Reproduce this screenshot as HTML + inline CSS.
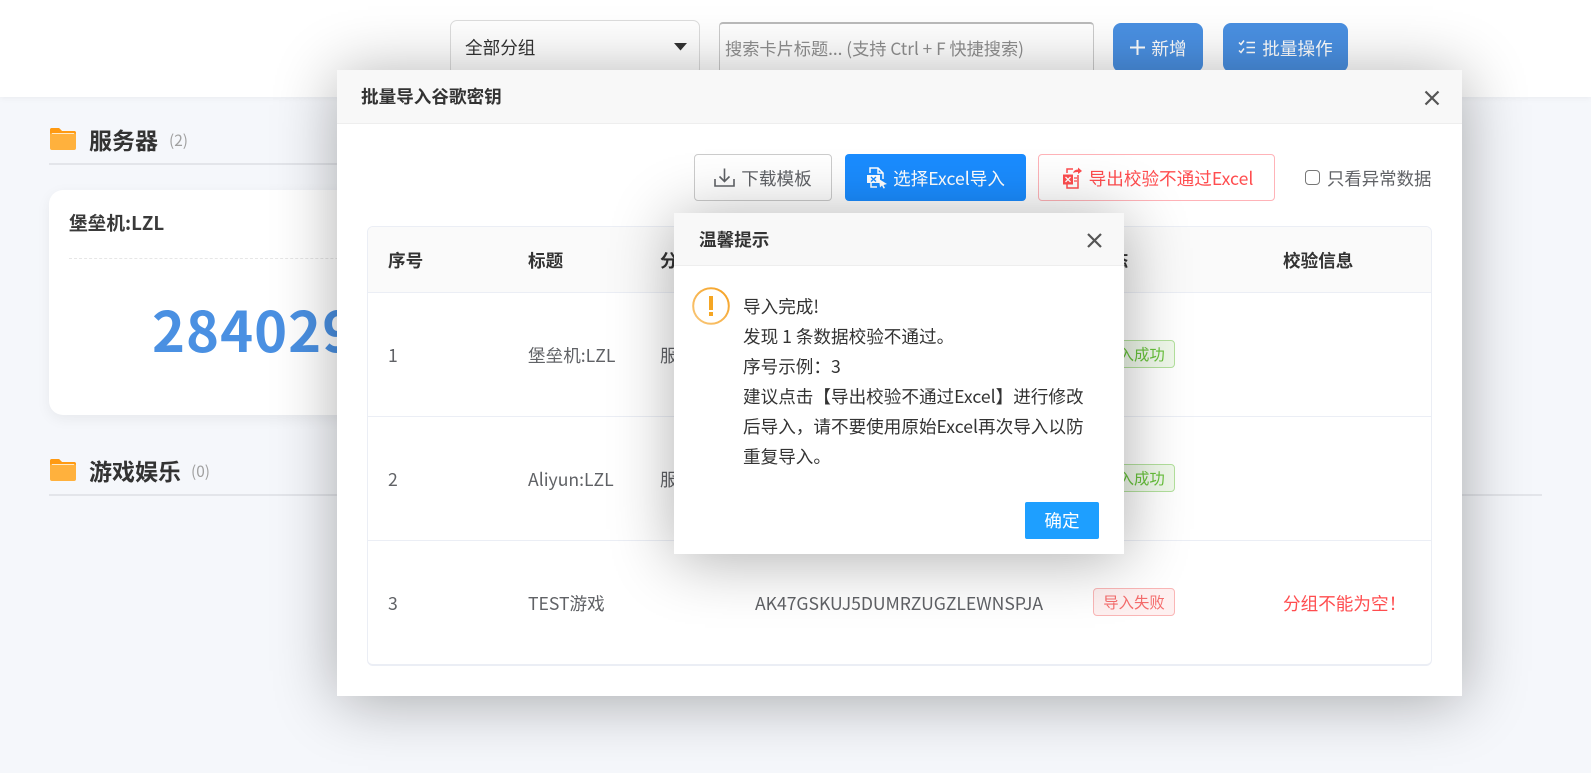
<!DOCTYPE html>
<html lang="zh-CN">
<head>
<meta charset="utf-8">
<title>批量导入谷歌密钥</title>
<style>
*{box-sizing:border-box;margin:0;padding:0}
html,body{width:1591px;height:773px;overflow:hidden;background:#f5f7fb}
body{position:relative;font-family:"Noto Sans CJK SC","Liberation Sans",sans-serif;font-size:17.6px;color:#333}
.a{position:absolute;white-space:nowrap}
.t{position:absolute;white-space:nowrap;line-height:30px;height:30px}
.b{font-weight:700}
.btn{position:absolute;display:flex;align-items:center;justify-content:center;white-space:nowrap;font-size:17.6px;padding-top:1px}
.tag{position:absolute;left:1093px;width:82px;height:28px;line-height:27px;text-align:center;border-radius:4px;font-size:15.4px;border:1px solid}
.ok{background:#f0f9eb;border-color:#b3e19d;color:#67c23a}
.bad{background:#fef0f0;border-color:#fab6b6;color:#f56c6c}
.c{color:#606266}
.h{color:#333;font-weight:700}
.rule{position:absolute;left:367px;width:1065px;height:1px;background:#ebeef5}
svg{display:block}
</style>
</head>
<body>
<!-- Top bar -->
<div class="a" style="left:0;top:0;width:1591px;height:97px;background:#fff;box-shadow:0 1px 6px rgba(0,0,0,.05)"></div>
<div class="a" style="left:450px;top:20px;width:250px;height:56px;border:1px solid #ddd;border-radius:7px;background:#fff"></div>
<div class="t" style="left:465px;top:33px">全部分组</div>
<svg class="a" style="left:674px;top:43px" width="13" height="8" viewBox="0 0 13 8"><path d="M0 0H13L6.500 7.500Z" fill="#333"/></svg>
<div class="a" style="left:719px;top:22px;width:375px;height:56px;border:1px solid #ccc;border-top:2px solid #bbb;border-radius:4px;background:#fff"></div>
<div class="t" style="left:725px;top:33px;color:#8f8f8f;font-size:17.200px">搜索卡片标题... (支持 Ctrl + F 快捷搜索)</div>
<div class="btn" style="left:1113px;top:23px;width:90px;height:49px;border-radius:8px;background:#4a90e2;color:#fff;padding-top:2px">
<svg width="17" height="17" viewBox="0 0 17 17" style="margin-right:5px;margin-top:-2px"><path d="M8.500 1V16M1 8.500H16" stroke="#fff" stroke-width="2" fill="none"/></svg>新增</div>
<div class="btn" style="left:1223px;top:23px;width:125px;height:49px;border-radius:8px;background:#4a90e2;color:#fff;padding-top:2px">
<svg width="18" height="17" viewBox="0 0 18 17" style="margin-right:6px;margin-top:-2px"><path d="M1 3.500L3 5.500L6 1.500M1 11.500L3 13.500L6 9.500M8.500 3.500H17M8.500 8.500H17M8.500 13.500H17" stroke="#fff" stroke-width="1.500" fill="none"/></svg>批量操作</div>

<!-- Page content -->
<svg class="a" style="left:50px;top:128px" width="26" height="22" viewBox="0 0 26 22"><path d="M0 2Q0 0 2 0H9L12 3H24Q26 3 26 5V20Q26 22 24 22H2Q0 22 0 20Z" fill="#ffb13d"/><path d="M0 2Q0 0 2 0H9L12 3H24Q26 3 26 5V7Q26 5 24 5H2Q0 5 0 7Z" fill="#ff9a12"/><path d="M2 5.500H24" stroke="#ffe9c6" stroke-width="1"/></svg>
<div class="t b" style="left:89px;top:124px;font-size:23px">服务器</div>
<div class="t" style="left:169px;top:125px;font-size:15.400px;color:#a0a0a0">(2)</div>
<div class="a" style="left:49px;top:163px;width:400px;height:2px;background:#e3e5ea"></div>
<div class="a" style="left:49px;top:190px;width:400px;height:225px;background:#fff;border-radius:14px;box-shadow:0 4px 14px rgba(0,0,0,.06)"></div>
<div class="t b" style="left:69px;top:208px;font-size:18.700px;color:#3a3a3a">堡垒机:LZL</div>
<div class="a" style="left:69px;top:258px;width:380px;border-top:1px dashed #e6e6e6"></div>
<div class="a b" style="left:152px;top:289px;font-size:56px;line-height:80px;letter-spacing:1px;color:#4a90e2">284029</div>

<svg class="a" style="left:50px;top:459px" width="26" height="22" viewBox="0 0 26 22"><path d="M0 2Q0 0 2 0H9L12 3H24Q26 3 26 5V20Q26 22 24 22H2Q0 22 0 20Z" fill="#ffb13d"/><path d="M0 2Q0 0 2 0H9L12 3H24Q26 3 26 5V7Q26 5 24 5H2Q0 5 0 7Z" fill="#ff9a12"/><path d="M2 5.500H24" stroke="#ffe9c6" stroke-width="1"/></svg>
<div class="t b" style="left:89px;top:455px;font-size:23px">游戏娱乐</div>
<div class="t" style="left:191px;top:456px;font-size:15.400px;color:#a0a0a0">(0)</div>
<div class="a" style="left:49px;top:494px;width:1493px;height:2px;background:#e3e5ea"></div>

<!-- Large modal -->
<div class="a" style="left:337px;top:70px;width:1125px;height:626px;background:#fff;box-shadow:1px 5px 60px rgba(0,0,0,.32)"></div>
<div class="a" style="left:337px;top:70px;width:1125px;height:54px;background:#f8f8f8;border-bottom:1px solid #eee"></div>
<div class="t b" style="left:361px;top:82px">批量导入谷歌密钥</div>
<svg class="a" style="left:1424px;top:90px" width="16" height="16" viewBox="0 0 16 16"><path d="M1.500 1.500L14.500 14.500M14.500 1.500L1.500 14.500" stroke="#555" stroke-width="2.200" fill="none"/></svg>

<!-- Toolbar -->
<div class="btn" style="left:694px;top:154px;width:138px;height:47px;border:1px solid #ccc;border-radius:4px;background:#fff;color:#606266;padding-top:2px">
<svg width="21" height="21" viewBox="0 0 21 21" style="margin-right:6px;margin-top:-2px"><path d="M10.500 1.500V14M5.500 9.500L10.500 14.500L15.500 9.500M1 12V19H20V12" stroke="#5f6266" stroke-width="1.600" fill="none"/></svg>下载模板</div>
<div class="btn" style="left:845px;top:154px;width:181px;height:47px;border-radius:4px;background:#1a8cff;color:#fff;padding-top:2px">
<svg width="22" height="23" viewBox="0 0 22 23" style="margin-right:5px;margin-top:-2px"><path d="M4 7V2H12L17 7V13M12 2V7H17M5 17V21H11" stroke="#fff" stroke-width="1.500" fill="none"/><rect x="1" y="9" width="13" height="8" fill="#fff"/><path d="M5 11L10 15.500M10 11L5 15.500" stroke="#1a8cff" stroke-width="1.400"/><path d="M13 13L21 18L17.500 19L19 22L17.500 22.500L16 19.500L14 21.500Z" fill="#fff"/></svg>选择Excel导入</div>
<div class="btn" style="left:1038px;top:154px;width:237px;height:47px;border:1px solid #ffb3b8;border-radius:4px;background:#fff;color:#ff4d4f;padding-top:2px;padding-left:2px">
<svg width="20" height="22" viewBox="0 0 20 22" style="margin-right:7px;margin-top:-2px"><path d="M5 6V2H11M16 8V21H5V17" stroke="#ff4d4f" stroke-width="1.500" fill="none"/><rect x="1" y="7.500" width="10" height="10" fill="#ff4d4f"/><path d="M3.500 10L8.500 15M8.500 10L3.500 15" stroke="#fff" stroke-width="1.300"/><path d="M12 11H15M12 14H15" stroke="#ff4d4f" stroke-width="1.300"/><path d="M11 6Q12 2.500 16 2.500V0.500L20 4L16 7V5Q13 5 11 6Z" fill="#ff4d4f"/></svg>导出校验不通过Excel</div>
<div class="a" style="left:1305px;top:170px;width:15px;height:15px;border:1.500px solid #777;border-radius:4px;background:#fff"></div>
<div class="t" style="left:1327px;top:164px;color:#606266;font-size:17.400px">只看异常数据</div>

<!-- Table -->
<div class="a" style="left:367px;top:226px;width:1065px;height:440px;border:1px solid #ebeef5;border-bottom-width:2px;border-radius:6px;background:#fff"></div>
<div class="a" style="left:368px;top:227px;width:1063px;height:66px;background:#fafafa;border-radius:5px 5px 0 0"></div>
<div class="rule" style="top:292px"></div>
<div class="rule" style="top:416px"></div>
<div class="rule" style="top:540px"></div>

<div class="t h" style="left:388px;top:246px">序号</div>
<div class="t h" style="left:528px;top:246px">标题</div>
<div class="t h" style="left:660px;top:246px">分组</div>
<div class="t h" style="left:1093px;top:246px">状态</div>
<div class="t h" style="left:1283px;top:246px">校验信息</div>

<div class="t c" style="left:388px;top:341px">1</div>
<div class="t c" style="left:528px;top:341px">堡垒机:LZL</div>
<div class="t c" style="left:660px;top:341px">服务器</div>
<div class="tag ok" style="top:340px">导入成功</div>

<div class="t c" style="left:388px;top:465px">2</div>
<div class="t c" style="left:528px;top:465px">Aliyun:LZL</div>
<div class="t c" style="left:660px;top:465px">服务器</div>
<div class="tag ok" style="top:464px">导入成功</div>

<div class="t c" style="left:388px;top:589px">3</div>
<div class="t c" style="left:528px;top:589px">TEST游戏</div>
<div class="t c" style="left:755px;top:589px;letter-spacing:-.04px">AK47GSKUJ5DUMRZUGZLEWNSPJA</div>
<div class="tag bad" style="top:588px">导入失败</div>
<div class="t" style="left:1283px;top:589px;color:#ff4d4f">分组不能为空！</div>

<!-- Small dialog -->
<div class="a" style="left:674px;top:213px;width:450px;height:341px;background:#fff;box-shadow:1px 5px 60px rgba(0,0,0,.32)"></div>
<div class="a" style="left:674px;top:213px;width:450px;height:53px;background:#f8f8f8;border-bottom:1px solid #eee"></div>
<div class="t b" style="left:699px;top:225px">温馨提示</div>
<svg class="a" style="left:1087px;top:233px" width="15" height="15" viewBox="0 0 15 15"><path d="M1 1L14 14M14 1L1 14" stroke="#555" stroke-width="2.200" fill="none"/></svg>
<svg class="a" style="left:692px;top:287px" width="38" height="38" viewBox="0 0 38 38"><defs><linearGradient id="g" x1="1" y1="0" x2="0" y2="1"><stop offset="0" stop-color="#f5a01f"/><stop offset="1" stop-color="#f9c87c"/></linearGradient></defs><circle cx="19" cy="19" r="17.800" fill="none" stroke="url(#g)" stroke-width="2"/><rect x="17" y="9" width="4" height="14" fill="#f5a623"/><rect x="17" y="25" width="4" height="4" fill="#f5a623"/></svg>
<div class="a" style="left:743px;top:292px;line-height:30.100px;color:#333">导入完成!<br>发现 1 条数据校验不通过。<br>序号示例：3<br>建议点击【导出校验不通过Excel】进行修改<br>后导入，请不要使用原始Excel再次导入以防<br>重复导入。</div>
<div class="btn" style="left:1025px;top:502px;width:74px;height:37px;background:#1e9fff;color:#fff;border-radius:2px;padding-top:0">确定</div>
</body>
</html>
